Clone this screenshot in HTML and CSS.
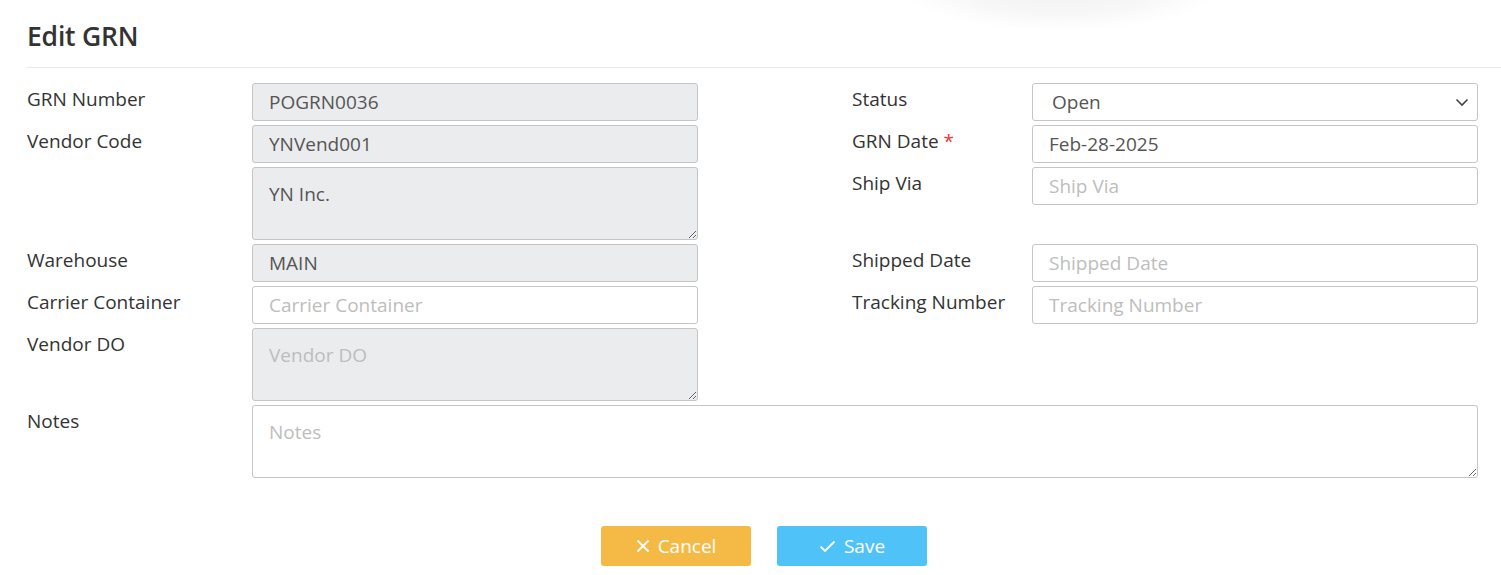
FILE: index.html
```html
<!DOCTYPE html>
<html lang="en">
<head>
<meta charset="utf-8">
<title>Edit GRN</title>
<link rel="stylesheet" href="styles.css">
</head>
<body>
<div class="shadow-peek"></div>
<div class="page">
  <h1 class="title">Edit GRN</h1>
  <div class="divider"></div>
  <form class="form-grid">
    <label class="lbl">GRN Number</label>
    <input class="ctl" type="text" value="POGRN0036" disabled>
    <span class="gap"></span>
    <label class="lbl">Status</label>
    <div class="select-wrap">
      <select class="ctl sel"><option>Open</option></select>
      <svg class="chev" width="14" height="9" viewBox="0 0 14 9"><path d="M1.5 1.5 L7 7 L12.5 1.5" fill="none" stroke="#444" stroke-width="1.6"/></svg>
    </div>

    <label class="lbl">Vendor Code</label>
    <input class="ctl" type="text" value="YNVend001" disabled>
    <span class="gap"></span>
    <label class="lbl">GRN Date <span class="req">*</span></label>
    <input class="ctl" type="text" value="Feb-28-2025">

    <span class="lbl"></span>
    <textarea class="ctl area" disabled>YN Inc.</textarea>
    <span class="gap"></span>
    <label class="lbl">Ship Via</label>
    <input class="ctl top" type="text" placeholder="Ship Via">

    <label class="lbl">Warehouse</label>
    <input class="ctl" type="text" value="MAIN" disabled>
    <span class="gap"></span>
    <label class="lbl">Shipped Date</label>
    <input class="ctl" type="text" placeholder="Shipped Date">

    <label class="lbl">Carrier Container</label>
    <input class="ctl" type="text" placeholder="Carrier Container">
    <span class="gap"></span>
    <label class="lbl">Tracking Number</label>
    <input class="ctl" type="text" placeholder="Tracking Number">

    <label class="lbl">Vendor DO</label>
    <textarea class="ctl area" placeholder="Vendor DO" disabled></textarea>
    <span class="gap"></span>
    <span class="lbl"></span>
    <span class="gap"></span>

    <label class="lbl">Notes</label>
    <textarea class="ctl area notes" placeholder="Notes"></textarea>
  </form>
  <div class="actions">
    <button class="btn btn-cancel" type="button">
      <svg width="14" height="14" viewBox="0 0 14 14"><path d="M1.5 1.5 L12.5 12.5 M12.5 1.5 L1.5 12.5" stroke="#fff" stroke-width="1.8" fill="none"/></svg>
      Cancel
    </button>
    <button class="btn btn-save" type="button">
      <svg width="17" height="13" viewBox="0 0 17 13"><path d="M1.5 6.5 L6 11 L15.5 1.5" stroke="#fff" stroke-width="1.8" fill="none"/></svg>
      Save
    </button>
  </div>
</div>
</body>
</html>
```

FILE: styles.css
```css
* { box-sizing: border-box; }
html, body { margin: 0; padding: 0; background: #fff; }
body {
  font-family: "Open Sans", "Noto Sans", sans-serif;
  color: #333;
  overflow: hidden;
  position: relative;
  width: 1501px;
  height: 575px;
}
.shadow-peek {
  position: absolute;
  left: 900px;
  top: -60px;
  width: 320px;
  height: 90px;
  border-radius: 50%;
  background: radial-gradient(ellipse at center, rgba(0,0,0,0.06) 0%, rgba(0,0,0,0.03) 45%, rgba(0,0,0,0) 72%);
}
.page {
  padding-left: 27px;
}
.title {
  margin: 0;
  padding-top: 18px;
  height: 67px;
  font-size: 26.5px;
  font-weight: 600;
  color: #333;
  letter-spacing: -0.2px;
  line-height: 36px;
}
.divider {
  height: 1px;
  background: #e8e8e8;
  margin-bottom: 15px;
}
.form-grid {
  display: grid;
  grid-template-columns: 225px 446px 154px 180px 446px;
  grid-auto-rows: auto;
  row-gap: 4.5px;
  margin: 0;
}
.lbl {
  font-size: 19px;
  color: #333;
  line-height: 24px;
  padding-top: 4px;
}
.req { color: #e53935; }
.ctl {
  font-family: "Open Sans", "Noto Sans", sans-serif;
  font-size: 19px;
  color: #555;
  height: 37.5px;
  width: 446px;
  border: 1px solid #c5c5c5;
  border-radius: 3px;
  padding: 0 16px;
  background: #fff;
  margin: 0;
  outline: none;
}
.ctl:disabled { background: #ebecee; color: #555; }
.ctl::placeholder { color: #bdbdbd; opacity: 1; }
.area {
  height: 72.5px;
  padding: 14px 16px 10px;
  resize: vertical;
  line-height: 24px;
  display: block;
}
.top { align-self: start; }
.notes {
  grid-column: 2 / 6;
  width: auto;
}
.select-wrap {
  position: relative;
  width: 446px;
}
.sel {
  appearance: none;
  -webkit-appearance: none;
  padding-left: 19px;
}
.chev {
  position: absolute;
  right: 9px;
  top: 15px;
  pointer-events: none;
}
.actions {
  display: flex;
  gap: 26px;
  padding-left: 574px;
  margin-top: 48.5px;
}
.btn {
  width: 150px;
  height: 40px;
  border: none;
  border-radius: 3px;
  color: #fff;
  font-family: "Open Sans", "Noto Sans", sans-serif;
  font-size: 19px;
  display: flex;
  align-items: center;
  justify-content: center;
  gap: 8px;
  padding: 0;
}
.btn-cancel { background: #f5ba45; }
.btn-save { background: #4fc3f7; }
```
